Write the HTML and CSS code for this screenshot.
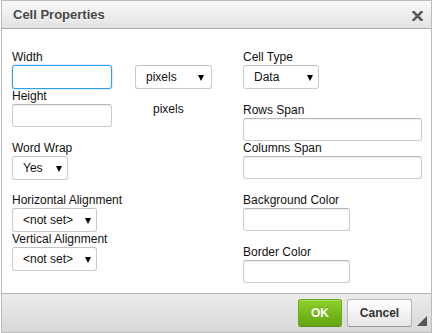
FILE: index.html
```html
<!DOCTYPE html>
<html>
<head>
<meta charset="utf-8">
<link rel="stylesheet" href="styles.css">
</head>
<body>
<div class="dialog">
  <div class="titlebar">
    <span class="title">Cell Properties</span>
    <span class="close"><svg width="11" height="10" viewBox="0 0 11 10"><path d="M1.5 1 L9.5 9 M9.5 1 L1.5 9" stroke="#5b5b5b" stroke-width="2.6" stroke-linecap="square"/></svg></span>
  </div>
  <div class="contents">
    <div class="col">
      <div class="size-grid">
        <label class="lbl w-lbl">Width</label>
        <input class="txt focus w-in" type="text">
        <div class="sel w-sel units"><select><option>pixels</option></select></div>
        <label class="lbl h-lbl">Height</label>
        <input class="txt h-in" type="text">
        <span class="unit">pixels</span>
      </div>
      <div class="field gap14">
        <label class="lbl">Word Wrap</label>
        <div class="sel wrap"><select><option>Yes</option></select></div>
      </div>
      <div class="field gap13">
        <label class="lbl">Horizontal Alignment</label>
        <div class="sel align"><select><option>&lt;not set&gt;</option></select></div>
      </div>
      <div class="field">
        <label class="lbl">Vertical Alignment</label>
        <div class="sel align"><select><option>&lt;not set&gt;</option></select></div>
      </div>
    </div>
    <div class="col right">
      <div class="field">
        <label class="lbl">Cell Type</label>
        <div class="sel ctype"><select><option>Data</option></select></div>
      </div>
      <div class="field gap14">
        <label class="lbl">Rows Span</label>
        <input class="txt wide" type="text">
      </div>
      <div class="field">
        <label class="lbl">Columns Span</label>
        <input class="txt wide" type="text">
      </div>
      <div class="field gap14">
        <label class="lbl">Background Color</label>
        <input class="txt color" type="text">
      </div>
      <div class="field gap14">
        <label class="lbl">Border Color</label>
        <input class="txt color" type="text">
      </div>
    </div>
  </div>
  <div class="footer">
    <button class="btn ok">OK</button>
    <button class="btn cancel">Cancel</button>
    <span class="grip"></span>
  </div>
</div>
</body>
</html>
```

FILE: styles.css
```css
* { box-sizing: border-box; }
html, body { margin: 0; padding: 0; background: #fff; }
body { font-family: "Liberation Sans", Arial, sans-serif; font-size: 12px; color: #1a1a1a; }

.dialog {
  position: relative;
  margin-left: 1px;
  width: 431px;
  height: 333px;
  border: 1px solid #bcbcbc;
  display: flex;
  flex-direction: column;
  background: #fff;
}

.titlebar {
  height: 28px;
  border-bottom: 1px solid #a8a8a8;
  background: linear-gradient(#f8f8f8, #e3e3e3);
  display: flex;
  align-items: center;
  justify-content: space-between;
  padding: 0 8px 0 11px;
}
.title {
  font-weight: bold;
  font-size: 13px;
  color: #474747;
  text-shadow: 0 1px 0 rgba(255,255,255,.75);
  line-height: 16px;
  padding-top: 1px;
}
.close { display: flex; padding-top: 2px; }

.contents {
  height: 264px;
  display: grid;
  grid-template-columns: 231px 179px;
  padding: 21px 0 0 10px;
  align-content: start;
}
.col { display: flex; flex-direction: column; align-items: flex-start; }

.lbl { display: block; line-height: 15px; height: 15px; color: #111; }
.field { display: flex; flex-direction: column; align-items: flex-start; }
.gap14 { margin-top: 14px; }
.gap13 { margin-top: 13px; }

.txt {
  display: block;
  height: 23px;
  border: 1px solid #c9cccf;
  border-top-color: #b4b8bd;
  border-radius: 3px;
  background: #fff;
  box-shadow: inset 0 1px 1px rgba(0,0,0,.06);
  font: 12px "Liberation Sans", Arial, sans-serif;
  padding: 0 4px;
  outline: none;
  margin: 0;
}
.txt.focus {
  border-color: #2f9ff2;
  box-shadow: 0 0 0 0.5px rgba(47,159,242,.35);
  height: 24px;
}

.size-grid {
  display: grid;
  grid-template-columns: 100px 77px;
  column-gap: 23px;
  grid-template-rows: 15px 24px 15px 23px;
}
.w-lbl { grid-column: 1; grid-row: 1; }
.w-in { grid-column: 1; grid-row: 2; width: 100px; }
.w-sel { grid-column: 2; grid-row: 2; }
.h-lbl { grid-column: 1; grid-row: 3; }
.h-in { grid-column: 1; grid-row: 4; width: 100px; }
.unit {
  grid-column: 2; grid-row: 3 / span 2;
  align-self: center;
  padding: 3px 0 0 18px;
  line-height: 15px;
  color: #111;
}

.sel { position: relative; height: 24px; }
.sel select {
  -webkit-appearance: none;
  appearance: none;
  width: 100%;
  height: 24px;
  border: 1px solid #c9cccf;
  border-top-color: #bfc2c6;
  border-radius: 3px;
  background: #fff;
  font: 12px "Liberation Sans", Arial, sans-serif;
  color: #111;
  padding: 0 0 0 10px;
  margin: 0;
  outline: none;
}
.sel::after {
  content: "";
  position: absolute;
  right: 6px;
  top: 10px;
  border-left: 3.5px solid transparent;
  border-right: 3.5px solid transparent;
  border-top: 6px solid #000;
  pointer-events: none;
}
.units { width: 77px; }
.units::after { right: 8px; }
.wrap { width: 56px; }
.align { width: 85px; }
.ctype { width: 76px; }

.wide { width: 179px; }
.color { width: 107px; }

.footer {
  position: relative;
  flex: 1;
  border-top: 1px solid #b2b2b2;
  background: linear-gradient(#ebebeb, #d8d8d8);
  display: flex;
  justify-content: flex-end;
  align-items: flex-start;
  gap: 5px;
  padding: 5px 19px 0 0;
}
.btn {
  height: 28px;
  border-radius: 3px;
  font: bold 12px "Liberation Sans", Arial, sans-serif;
  padding: 0;
  margin: 0;
  cursor: pointer;
}
.ok {
  width: 44px;
  color: #fff;
  background: linear-gradient(#8cd02a, #62a50e);
  border: 1px solid #6aa81c;
  border-bottom-color: #5a9410;
  text-shadow: 0 -1px 0 rgba(0,0,0,.15);
  box-shadow: inset 0 1px 0 rgba(255,255,255,.25);
}
.cancel {
  width: 65px;
  color: #333;
  background: linear-gradient(#ffffff, #e6e6e6);
  border: 1px solid #b6b6b6;
  border-bottom-color: #999;
  box-shadow: inset 0 1px 0 #fff;
}
.grip {
  position: absolute;
  right: 4px;
  bottom: 6px;
  width: 0;
  height: 0;
  border-left: 10px solid transparent;
  border-bottom: 10px solid #555;
}
```
